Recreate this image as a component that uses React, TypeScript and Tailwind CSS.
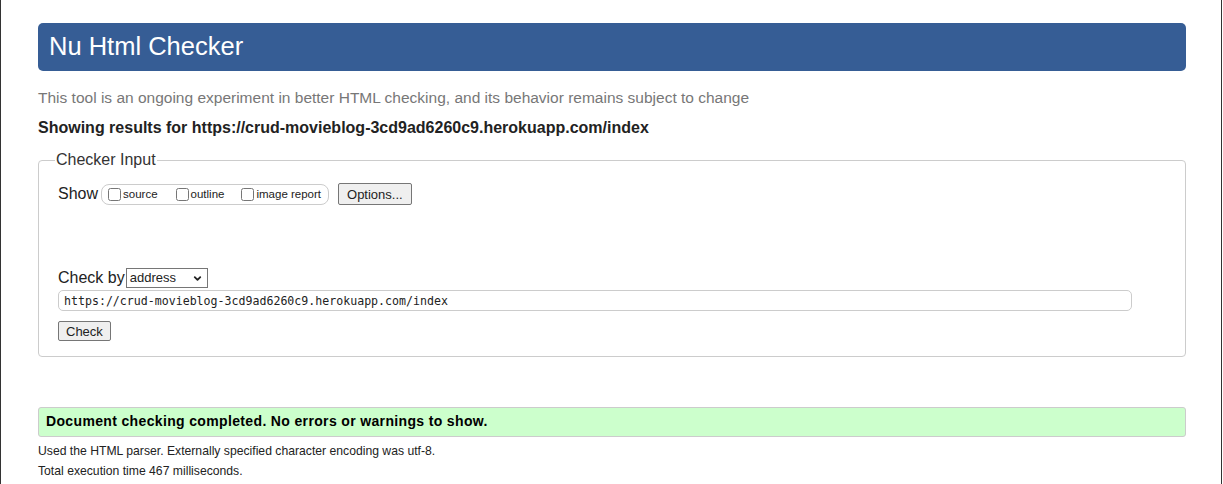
import { ChevronDown } from "lucide-react"

const url = "https://crud-movieblog-3cd9ad6260c9.herokuapp.com/index"

const Box = ({ label, className }: { label: string; className?: string }) => (
    <label className={`flex items-center ${className ?? ""}`}>
        <input type="checkbox" className="m-0 h-[13px] w-[13px]" />
        <span className="ml-[2px] text-[11.5px] leading-[13px]">{label}</span>
    </label>
)

const App = () => {
    return <div className="min-h-[484px] w-[1222px] border-x border-[#333] bg-white pl-[37px] pr-[35px] pt-[23px] font-['Liberation_Sans',Arial,sans-serif] text-[#222]">
        <div className="flex h-[48px] items-center rounded-[5px] bg-[#365d95] px-[11px]">
            <h1 className="text-[25.5px] font-normal leading-none text-white">Nu Html Checker</h1>
        </div>
        <p className="mt-[17px] text-[15.5px] leading-[20px] text-[#777]">
            This tool is an ongoing experiment in better HTML checking, and its behavior remains subject to change
        </p>
        <p className="mt-[10px] text-[16px] font-bold leading-[20px]">Showing results for {url}</p>
        <fieldset className="mt-[12px] rounded-[4px] border border-[#ccc] pb-[13px] pl-[19px] pr-[53px] pt-[13px]">
            <legend className="-ml-[3px] px-[1px] text-[16px] leading-[20px] text-[#333]">Checker Input</legend>
            <div className="flex h-[22px] items-center">
                <span className="text-[16px] leading-[20px]">Show</span>
                <div className="ml-[3px] flex h-[21px] items-center rounded-[8px] border border-[#ccc] pl-[6px] pr-[7px]">
                    <Box label="source" />
                    <Box label="outline" className="ml-[18px]" />
                    <Box label="image report" className="ml-[17px]" />
                </div>
                <button className="ml-[9px] h-[22px] rounded-[2px] border border-[#767676] bg-[#efefef] px-[8px] text-[13px] leading-none">Options...</button>
            </div>
            <div className="mt-[63px] flex h-[20px] items-center">
                <span className="text-[16px] leading-[20px]">Check by</span>
                <div className="relative ml-[1px] flex h-[20px] w-[82px] items-center border border-[#767676] pl-[3px] text-[13px]">
                    <span>address</span>
                    <ChevronDown className="absolute right-[4px] top-[4px] h-[11px] w-[11px]" strokeWidth={4} />
                </div>
            </div>
            <input
                readOnly
                value={url}
                className="mt-[2px] block h-[21px] w-full rounded-[5px] border border-[#ccc] px-[5px] font-['DejaVu_Sans_Mono',monospace] text-[11.6px] outline-none"
            />
            <button className="mt-[10px] h-[20px] rounded-[2px] border border-[#767676] bg-[#efefef] px-[7px] text-[13px] leading-none">Check</button>
        </fieldset>
        <div className="mt-[50px] flex h-[30px] items-center rounded-[3px] border border-[#ccc] bg-[#ccffcc] px-[7px]">
            <span className="text-[14px] font-bold tracking-[0.35px] text-black">Document checking completed. No errors or warnings to show.</span>
        </div>
        <p className="mt-[4px] text-[12.2px] leading-[20px]">Used the HTML parser. Externally specified character encoding was utf-8.</p>
        <p className="text-[12.2px] leading-[20px]">Total execution time 467 milliseconds.</p>
    </div>
}

export default App
